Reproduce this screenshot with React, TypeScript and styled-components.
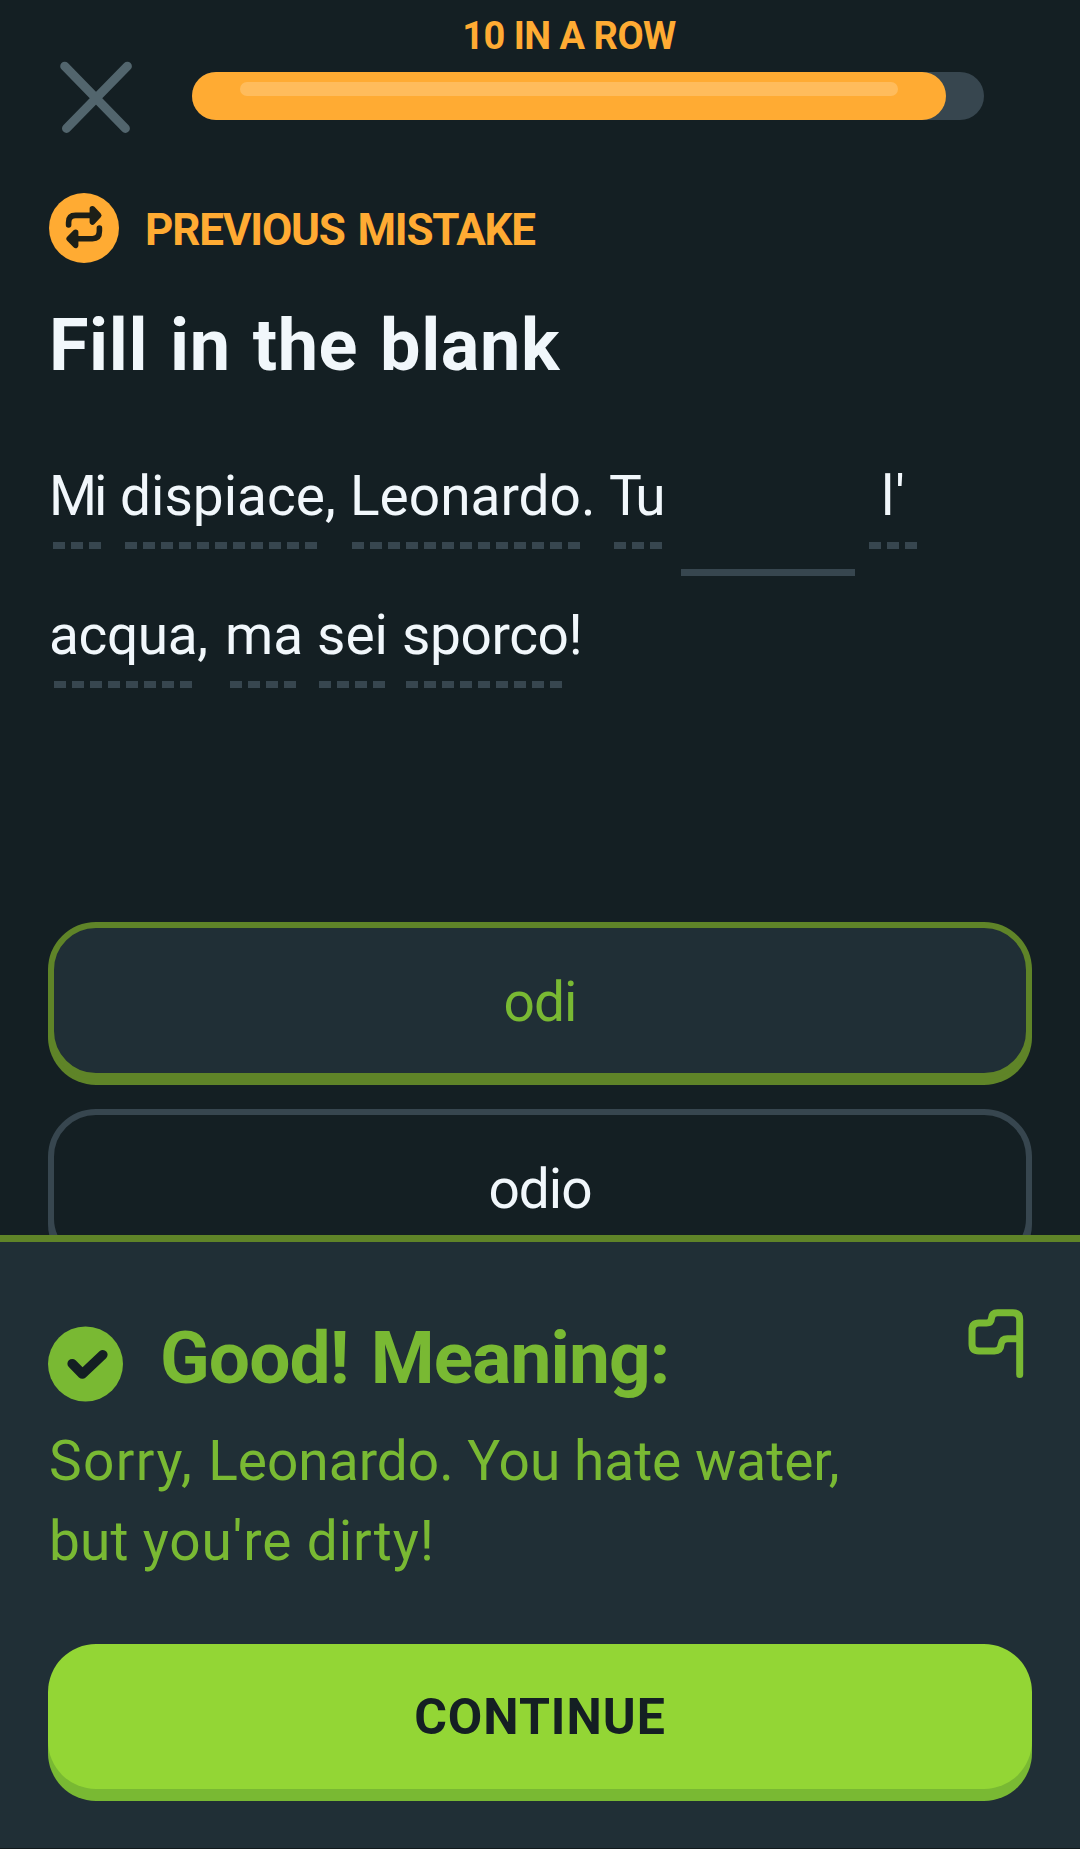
import React from "react";
import styled, { createGlobalStyle } from "styled-components";

const color = {
  page: "#141f23",
  panel: "#202f36",
  line: "#37464f",
  close: "#52656d",
  orange: "#ffab33",
  text: "#f1f7fb",
  green: "#79b933",
  greenDark: "#5f8428",
  lime: "#93d635",
  ink: "#141f23",
};

const GlobalStyle = createGlobalStyle`
  *, *::before, *::after { box-sizing: border-box; }
  body {
    margin: 0;
    background: ${color.page};
    font-family: Roboto, "Liberation Sans", sans-serif;
    -webkit-font-smoothing: antialiased;
  }
  button { font: inherit; padding: 0; border: 0; background: none; }
`;

const Screen = styled.div`
  display: flex;
  flex-direction: column;
  width: 1080px;
  height: 1849px;
  overflow: hidden;
  background: ${color.page};
`;

const Lesson = styled.main`
  height: 1235px;
  flex: none;
  overflow: hidden;
`;

const Header = styled.header`
  display: flex;
  gap: 60px;
  padding: 16px 96px 0 60px;
`;

const CloseButton = styled.button`
  width: 72px;
  height: 72px;
  margin-top: 45px;
  margin-bottom: -13px;
  flex: none;
`;

const Progress = styled.div`
  flex: 1;
  display: flex;
  flex-direction: column;
  gap: 16px;
`;

const Streak = styled.div`
  width: 754px;
  text-align: center;
  white-space: nowrap;
  font-size: 38px;
  line-height: 40px;
  font-weight: 700;
  letter-spacing: -0.5px;
  color: ${color.orange};
`;

const Track = styled.div`
  height: 48px;
  border-radius: 24px;
  background: ${color.line};
`;

const Fill = styled.div`
  width: 754px;
  height: 48px;
  padding: 10px 48px;
  border-radius: 24px;
  background: ${color.orange};
`;

const Shine = styled.div`
  height: 14px;
  border-radius: 7px;
  background: #ffbc5c;
`;

const MistakeRow = styled.div`
  display: flex;
  align-items: center;
  gap: 26px;
  height: 70px;
  margin: 73px 0 0 49px;
`;

const MistakeLabel = styled.div`
  padding-top: 3px;
  font-size: 44px;
  line-height: 50px;
  font-weight: 700;
  letter-spacing: -1.2px;
  word-spacing: 3px;
  white-space: nowrap;
  color: ${color.orange};
`;

const Title = styled.h1`
  margin: 43px 0 0 49px;
  font-size: 72px;
  line-height: 80px;
  font-weight: 700;
  letter-spacing: 0.6px;
  word-spacing: 3.5px;
  white-space: nowrap;
  color: ${color.text};
`;

const Sentence = styled.div`
  margin-top: 79px;
`;

const SentenceRow = styled.div`
  display: flex;
  height: 139px;
`;

const HintWordBox = styled.div<{ $gap: number; $width: number }>`
  flex: none;
  width: ${(p) => p.$width}px;
  margin-left: ${(p) => p.$gap}px;
`;

const WordText = styled.div<{ $shift: number; $spacing?: number }>`
  margin-left: ${(p) => p.$shift}px;
  padding-top: 1px;
  font-size: 55px;
  line-height: 60px;
  letter-spacing: ${(p) => p.$spacing ?? 0}px;
  white-space: nowrap;
  color: ${color.text};
`;

const Dashes = styled.div`
  height: 7px;
  margin-top: 16px;
  background: repeating-linear-gradient(
    to right,
    ${color.line} 0 12px,
    transparent 12px 18px
  );
`;

const Blank = styled.div`
  flex: none;
  width: 174px;
  height: 7px;
  margin: 104px 0 0 19px;
  background: ${color.line};
`;

const Options = styled.div`
  display: flex;
  flex-direction: column;
  gap: 30px;
  padding: 179px 48px 0;
`;

const Option = styled.button<{ $correct?: boolean }>`
  flex: none;
  display: flex;
  align-items: center;
  justify-content: center;
  height: 157px;
  && {
    padding-top: 3px;
    border: 6px solid ${(p) => (p.$correct ? color.greenDark : color.line)};
    background: ${(p) => (p.$correct ? color.panel : color.page)};
    font-size: 55px;
  }
  border-radius: 48px;
  box-shadow: 0 6px 0 ${(p) => (p.$correct ? color.greenDark : color.line)};
  line-height: 60px;
  letter-spacing: -1px;
  color: ${(p) => (p.$correct ? color.green : color.text)};
`;

const Feedback = styled.section`
  flex: 1;
  display: flex;
  flex-direction: column;
  padding: 68px 48px 47px;
  border-top: 7px solid ${color.greenDark};
  border-bottom: 1px solid #10191c;
  background: ${color.panel};
  color: ${color.green};
`;

const FeedbackHead = styled.div`
  display: flex;
  height: 92px;
`;

const Verdict = styled.h2`
  flex: 1;
  margin: 8px 0 0 37px;
  font-size: 73px;
  line-height: 80px;
  font-weight: 700;
  letter-spacing: -0.9px;
  word-spacing: 5px;
  white-space: nowrap;
`;

const Meaning = styled.p`
  margin: 19px 0 0 1px;
  font-size: 55px;
  line-height: 80px;
  white-space: nowrap;
`;

const Phrase = styled.span<{ $spacing: number }>`
  letter-spacing: ${(p) => p.$spacing}px;
`;

const ContinueButton = styled.button`
  flex: none;
  height: 145px;
  margin-top: auto;
  margin-bottom: 12px;
  border-radius: 48px;
  && {
    background: ${color.lime};
    font-size: 50px;
    font-weight: 700;
  }
  box-shadow: 0 12px 0 ${color.green};
  letter-spacing: 1px;
  color: ${color.ink};
`;

const FlagSvg = styled.svg`
  overflow: visible;
`;

const CloseIcon = () => (
  <svg width="72" height="72" viewBox="0 0 72 72" fill="none">
    <path
      d="M4.7 5.2 65.4 67.4M67.4 5.2 6.5 67.4"
      stroke={color.close}
      strokeWidth="9"
      strokeLinecap="round"
    />
  </svg>
);

const RepeatBadge = () => (
  <svg width="70" height="70" viewBox="0 0 70 70" fill="none">
    <circle cx="35" cy="35" r="35" fill={color.orange} />
    <g stroke="#1d1f17" strokeWidth="5.6" strokeLinecap="round" strokeLinejoin="round">
      <path d="M19.6 32v-2.6q0-7 7-7H44M50.4 35V38q0 7.700-7 7.700H26" />
      <path d="M43.4 15.800 49.700 22.400 43.4 29ZM26.6 39.200 20.200 45.800 26.6 52.400Z" fill="#1d1f17" />
    </g>
  </svg>
);

const CheckBadge = () => (
  <svg width="75" height="92" viewBox="0 0 75 92" fill="none">
    <circle cx="37.5" cy="54" r="37.5" fill={color.green} />
    <path
      d="M24.2 53.7 34.4 64 54.8 44.7"
      stroke={color.ink}
      strokeWidth="9.6"
      strokeLinecap="round"
      strokeLinejoin="round"
    />
  </svg>
);

const FlagIcon = () => (
  <FlagSvg width="64" height="92" viewBox="0 0 64 92" fill="none">
    <path
      d="M51.700 64.600V9.700q0-7-7-7H29.500q-5.600 0-6 5.500-.4 4.800-5 4.800H11q-7 0-7 7V34q0 7 7 7H26.500q6 0 6.500-6.200.6-6.100 6.500-6.100H51.700"
      stroke={color.green}
      strokeWidth="7"
      strokeLinecap="round"
      strokeLinejoin="round"
    />
  </FlagSvg>
);

type WordItem = {
  text: string;
  gap: number;
  dashes: number;
  shift: number;
  spacing?: number;
};

const firstRow: WordItem[] = [
  { text: "Mi", gap: 53, dashes: 3, shift: -4, spacing: -3 },
  { text: "dispiace,", gap: 24, dashes: 11, shift: -5 },
  { text: "Leonardo.", gap: 35, dashes: 13, shift: -2 },
  { text: "Tu", gap: 34, dashes: 3, shift: -5, spacing: -4 },
];

const afterBlank: WordItem = { text: "l'", gap: 14, dashes: 3, shift: 12, spacing: 1 };

const secondRow: WordItem[] = [
  { text: "acqua,", gap: 54, dashes: 8, shift: -5, spacing: -0.4 },
  { text: "ma", gap: 38, dashes: 4, shift: -5 },
  { text: "sei", gap: 23, dashes: 4, shift: -2 },
  { text: "sporco!", gap: 21, dashes: 9, shift: -4, spacing: -0.4 },
];

const HintWord = ({ item }: { item: WordItem }) => (
  <HintWordBox $gap={item.gap} $width={item.dashes * 18 - 6}>
    <WordText $shift={item.shift} $spacing={item.spacing}>
      {item.text}
    </WordText>
    <Dashes />
  </HintWordBox>
);

export default function App() {
  return (
    <>
      <GlobalStyle />
      <Screen>
        <Lesson>
          <Header>
            <CloseButton aria-label="Close">
              <CloseIcon />
            </CloseButton>
            <Progress>
              <Streak>10 IN A ROW</Streak>
              <Track>
                <Fill>
                  <Shine />
                </Fill>
              </Track>
            </Progress>
          </Header>
          <MistakeRow>
            <RepeatBadge />
            <MistakeLabel>PREVIOUS MISTAKE</MistakeLabel>
          </MistakeRow>
          <Title>Fill in the blank</Title>
          <Sentence>
            <SentenceRow>
              {firstRow.map((item) => (
                <HintWord key={item.text} item={item} />
              ))}
              <Blank />
              <HintWord item={afterBlank} />
            </SentenceRow>
            <SentenceRow>
              {secondRow.map((item) => (
                <HintWord key={item.text} item={item} />
              ))}
            </SentenceRow>
          </Sentence>
          <Options>
            <Option $correct>odi</Option>
            <Option>odio</Option>
          </Options>
        </Lesson>
        <Feedback>
          <FeedbackHead>
            <CheckBadge />
            <Verdict>Good! Meaning:</Verdict>
            <FlagIcon />
          </FeedbackHead>
          <Meaning>
            <Phrase $spacing={1.4}>Sorry, </Phrase>
            <Phrase $spacing={0}>Leonardo. You hate water,</Phrase>
            <br />
            <Phrase $spacing={0.2}>but </Phrase>
            <Phrase $spacing={0.9}>you're dirty!</Phrase>
          </Meaning>
          <ContinueButton>CONTINUE</ContinueButton>
        </Feedback>
      </Screen>
    </>
  );
}
